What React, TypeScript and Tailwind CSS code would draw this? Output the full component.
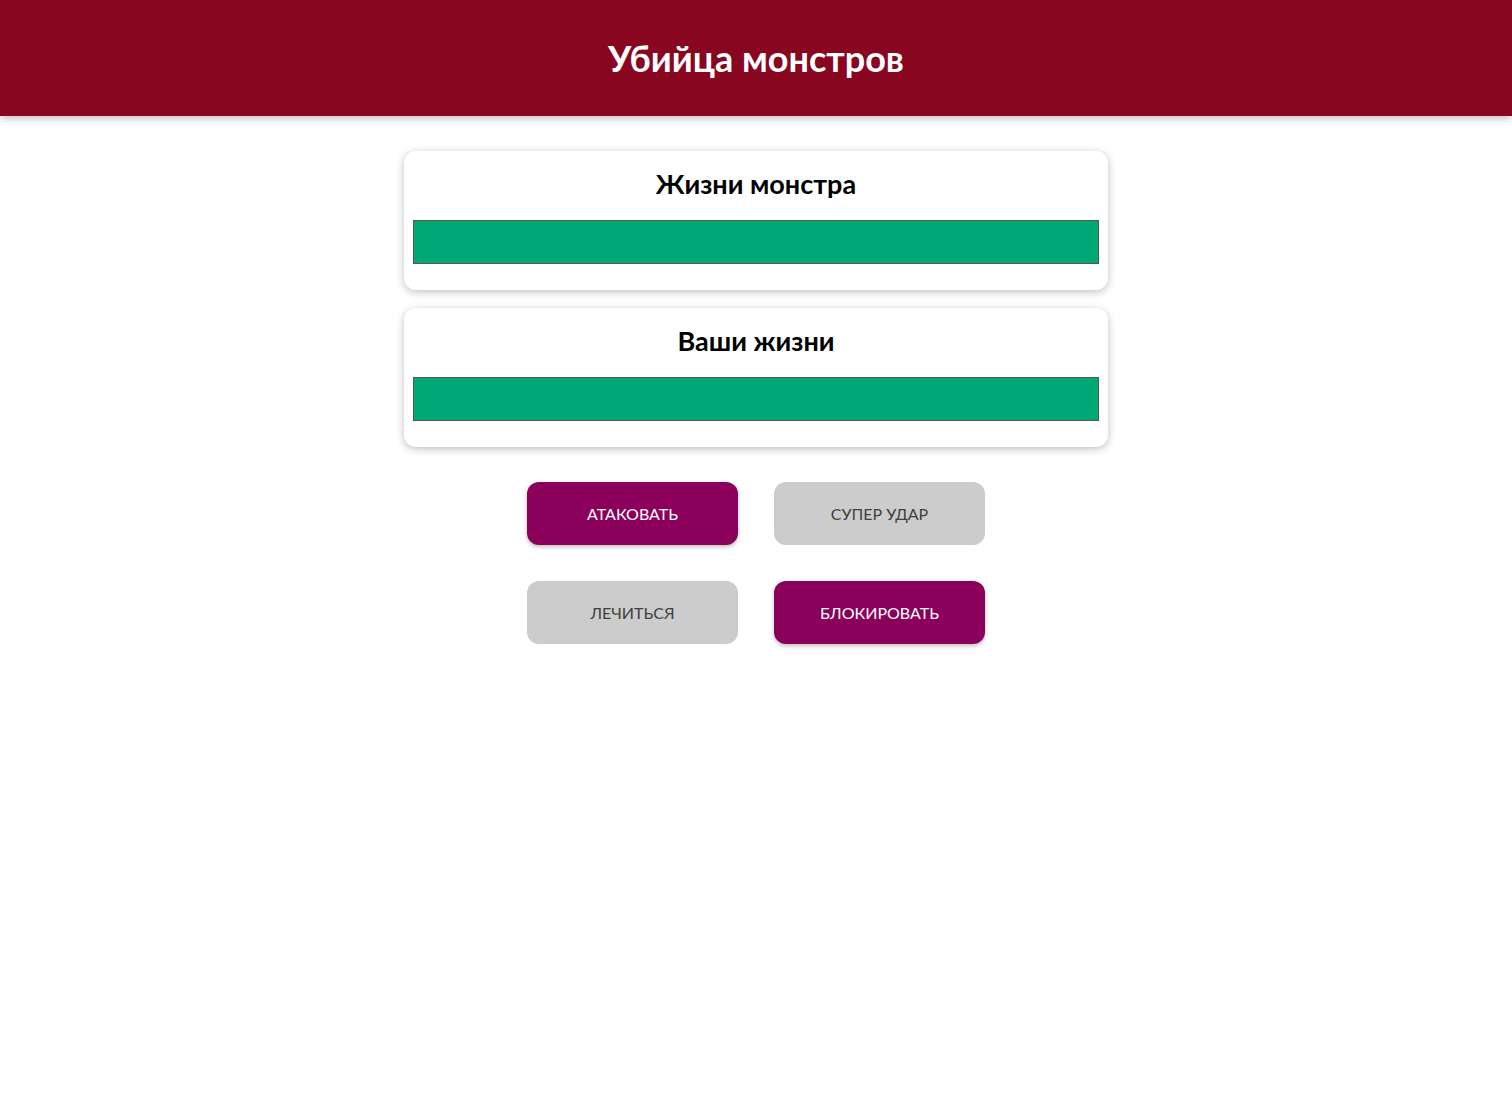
const HealthCard = ({ title, value }: { title: string; value: number }) => (
  <section className="w-[704px] rounded-xl bg-white px-[9px] pt-[16px] pb-[26px] shadow-[0_2px_8px_rgba(0,0,0,0.26)]">
    <h2 className="mb-[20px] text-center text-[27px] font-bold leading-[33px] text-black">
      {title}
    </h2>
    <div className="h-[44px] w-full border border-[#575757] bg-white">
      <div className="h-full bg-[#00a876]" style={{ width: `${value}%` }} />
    </div>
  </section>
);

type ActionProps = {
  readonly label: string;
  readonly primary?: boolean;
};

const ActionButton = ({ label, primary }: ActionProps) => (
  <button
    type="button"
    className={
      primary
        ? 'h-[63px] w-[211px] rounded-xl bg-[#8a005a] text-[16px] uppercase text-white shadow-[0_2px_4px_rgba(0,0,0,0.26)]'
        : 'h-[63px] w-[211px] rounded-xl bg-[#cccccc] text-[16px] uppercase text-[#3f3f3f]'
    }
  >
    {label}
  </button>
);

export default function App() {
  return (
    <div className="min-h-screen bg-white font-['Lato',sans-serif]">
      <header className="flex h-[116px] items-center justify-center bg-[#88061f] shadow-[0_2px_8px_rgba(0,0,0,0.26)]">
        <h1 className="text-[36px] font-bold leading-none text-white">Убийца монстров</h1>
      </header>
      <main className="flex flex-col items-center pt-[35px]">
        <div className="flex flex-col gap-[18px]">
          <HealthCard title="Жизни монстра" value={100} />
          <HealthCard title="Ваши жизни" value={100} />
        </div>
        <div className="mt-[35px] grid grid-cols-2 gap-[36px]">
          <ActionButton label="Атаковать" primary />
          <ActionButton label="Супер удар" />
          <ActionButton label="Лечиться" />
          <ActionButton label="Блокировать" primary />
        </div>
      </main>
    </div>
  );
}
